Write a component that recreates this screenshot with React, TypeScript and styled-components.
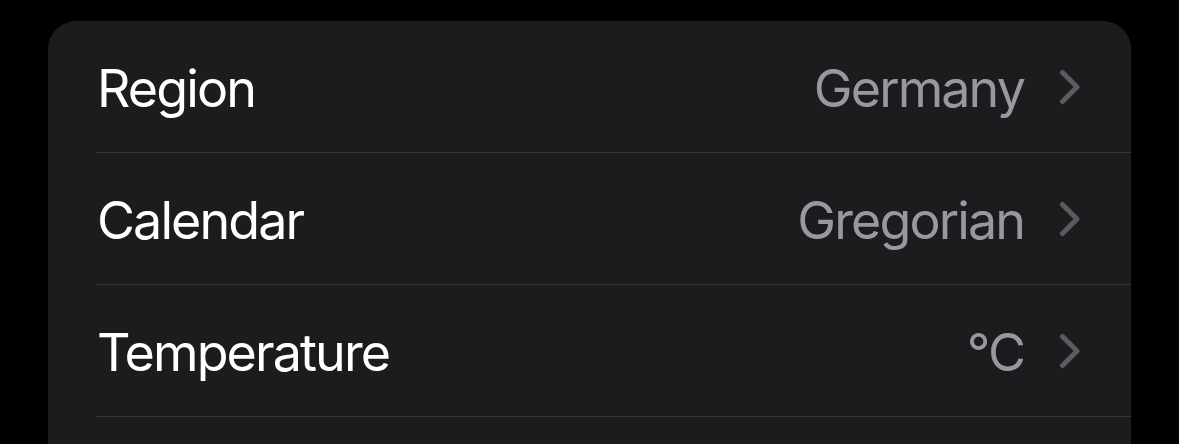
import React from "react";
import styled, { createGlobalStyle } from "styled-components";

const Global = createGlobalStyle`
  html, body { margin: 0; padding: 0; background: #000; }
  body { font-family: Inter, "Noto Sans", "Liberation Sans", sans-serif; -webkit-font-smoothing: antialiased; }
`;

const Page = styled.div`
  padding: 21px 48px 0 48px;
  height: 444px;
  box-sizing: border-box;
  overflow: hidden;
`;

const Card = styled.div`
  background: #1c1c1e;
  border-radius: 28px;
  padding-left: 48px;
  padding-bottom: 60px;
  display: flex;
  flex-direction: column;
`;

const Row = styled.div`
  height: 132px;
  display: flex;
  align-items: center;
  padding-right: 50px;
  padding-top: 3px;
  border-bottom: 1px solid #38383a;
  box-sizing: border-box;
`;

const Label = styled.span`
  flex: 1;
  color: #ffffff;
  font-size: 52px;
  letter-spacing: -1.9px;
  padding-left: 1px;
`;

const Value = styled.span`
  color: #98989e;
  font-size: 52px;
  letter-spacing: -1.9px;
  margin-right: 35px;
`;

const ChevronBox = styled.span`
  display: block;
  margin-top: -3px;
`;

const Chevron = () => (
  <ChevronBox>
    <svg width="22" height="36" viewBox="0 0 22 36" style={{ display: "block" }}>
      <polyline
        points="3.5,3.5 18,18 3.5,32.5"
        fill="none"
        stroke="#5b5b5f"
        strokeWidth="5"
        strokeLinecap="round"
        strokeLinejoin="round"
      />
    </svg>
  </ChevronBox>
);

const rows = [
  { label: "Region", value: "Germany" },
  { label: "Calendar", value: "Gregorian" },
  { label: "Temperature", value: "°C" },
];

export default function App() {
  return (
    <>
      <Global />
      <Page>
        <Card>
          {rows.map((r) => (
            <Row key={r.label}>
              <Label>{r.label}</Label>
              <Value>{r.value}</Value>
              <Chevron />
            </Row>
          ))}
        </Card>
      </Page>
    </>
  );
}
